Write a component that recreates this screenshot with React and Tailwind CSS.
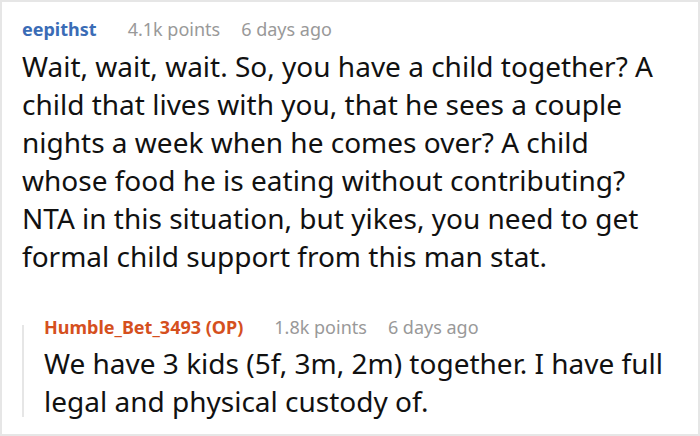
import React from "react";

const font = { fontFamily: '"Noto Sans", "Open Sans", sans-serif' };

function Meta({ name, nameClass, points, time }) {
  return (
    <div className="flex items-baseline text-[18px] leading-[24px] whitespace-nowrap">
      <span className={`font-bold ${nameClass}`}>{name}</span>
      <span className="ml-[31px] text-[#999999]">{points}</span>
      <span className="ml-[21px] text-[#999999]">{time}</span>
    </div>
  );
}

export default function App() {
  return (
    <div
      className="w-[700px] h-[436px] bg-white border-2 border-[#e6e6e6] overflow-hidden text-[#111111]"
      style={font}
    >
      <div className="pl-[20px] pt-[15px]">
        <Meta
          name="eepithst"
          nameClass="text-[#3a6cb6]"
          points="4.1k points"
          time="6 days ago"
        />
      </div>
      <p className="pl-[20px] mt-[6px] text-[28px] leading-[38px] whitespace-nowrap">
        Wait, wait, wait. So, you have a child together? A<br />
        child that lives with you, that he sees a couple<br />
        nights a week when he comes over? A child<br />
        whose food he is eating without contributing?<br />
        NTA in this situation, but yikes, you need to get<br />
        formal child support from this man stat.
      </p>
      <div className="mt-[40px] ml-[20px] flex">
        <div className="w-[2px] bg-[#e6e6e6] mt-[10px] mb-[3px]" />
        <div className="pl-[20px]">
          <Meta
            name="Humble_Bet_3493 (OP)"
            nameClass="text-[#d5501e]"
            points="1.8k points"
            time="6 days ago"
          />
          <p className="mt-[5px] text-[28px] leading-[38px] whitespace-nowrap">
            We have 3 kids (5f, 3m, 2m) together. I have full<br />
            legal and physical custody of.
          </p>
        </div>
      </div>
    </div>
  );
}
